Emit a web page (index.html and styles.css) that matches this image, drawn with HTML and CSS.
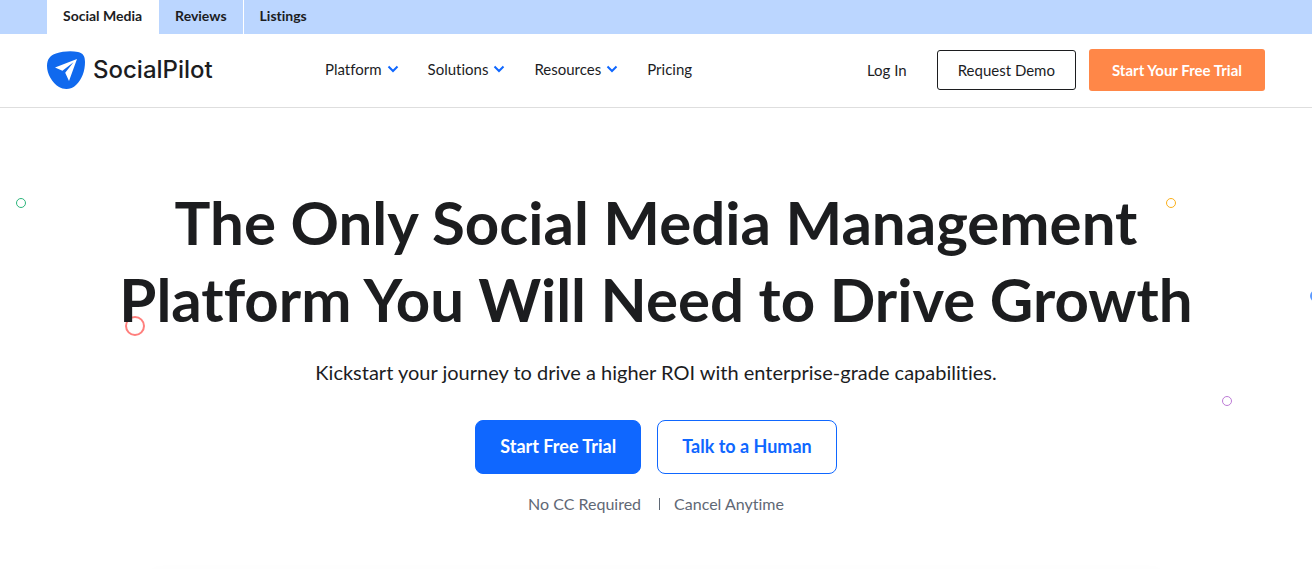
FILE: index.html
```html
<!DOCTYPE html>
<html lang="en">
<head>
<meta charset="utf-8">
<meta name="viewport" content="width=device-width, initial-scale=1">
<title>SocialPilot</title>
<link rel="stylesheet" href="styles.css">
</head>
<body>
<nav class="topbar" aria-label="Products">
  <a class="tab tab-active" href="#">Social Media</a>
  <a class="tab" href="#">Reviews</a>
  <a class="tab tab-last" href="#">Listings</a>
</nav>
<header class="header">
  <a class="logo" href="#">
    <svg class="logo-mark" viewBox="0 0 38 38" aria-hidden="true">
      <path fill="#1069ee" d="M0 15C0 8 3 4.500 9 2.500C16 0 25-.4 31 1C36 2.200 38 5 38 11C38 20 35 28 29 34C25 38.500 17 39 12 36C5 31.500 0 23 0 15Z"/>
      <path fill="#fff" d="M30 8L8 16.600L15.400 19.800L26.500 11.200L18.200 21.700L22 30Z"/>
    </svg>
    <span>SocialPilot</span>
  </a>
  <nav class="menu" aria-label="Main">
    <button class="menu-item">Platform<svg class="chevron" viewBox="0 0 12 8" aria-hidden="true"><path d="M1.500 1.500L6 6L10.500 1.500"/></svg></button>
    <button class="menu-item">Solutions<svg class="chevron" viewBox="0 0 12 8" aria-hidden="true"><path d="M1.500 1.500L6 6L10.500 1.500"/></svg></button>
    <button class="menu-item">Resources<svg class="chevron" viewBox="0 0 12 8" aria-hidden="true"><path d="M1.500 1.500L6 6L10.500 1.500"/></svg></button>
    <a class="menu-item" href="#">Pricing</a>
  </nav>
  <div class="actions">
    <a class="login" href="#">Log In</a>
    <a class="demo" href="#">Request Demo</a>
    <a class="trial" href="#">Start Your Free Trial</a>
  </div>
</header>
<main class="hero">
  <span class="ring ring-green"></span>
  <span class="ring ring-yellow"></span>
  <span class="ring ring-red"></span>
  <span class="ring ring-blue"></span>
  <span class="ring ring-purple"></span>
  <h1 class="title">The Only Social Media Management<br>Platform You Will Need to Drive Growth</h1>
  <p class="lead">Kickstart your journey to drive a higher ROI with enterprise-grade capabilities.</p>
  <div class="cta">
    <a class="btn btn-primary" href="#">Start Free Trial</a>
    <a class="btn btn-outline" href="#">Talk to a Human</a>
  </div>
  <ul class="notes">
    <li>No CC Required</li>
    <li class="note-next">Cancel Anytime</li>
  </ul>
  <div class="preview"></div>
</main>
</body>
</html>
```
FILE: styles.css
```css
* { box-sizing: border-box; }
body {
  margin: 0;
  font-family: Lato, "Liberation Sans", sans-serif;
  font-variant-ligatures: none;
  color: #1c1d1f;
  background: #fff;
}
a { color: inherit; text-decoration: none; }

.topbar {
  display: flex;
  height: 34px;
  padding-left: 47px;
  background: #bbd6ff;
}
.tab {
  padding: 0 16px;
  border-right: 1px solid #fff;
  font-size: 14px;
  line-height: 32px;
  font-weight: 700;
}
.tab-active { background: #fff; }
.tab-last { border-right: 0; }

.header {
  display: flex;
  align-items: center;
  height: 74px;
  padding: 0 47px 2px;
  border-bottom: 1px solid #dedede;
}
.logo {
  display: flex;
  align-items: center;
  gap: 8px;
  width: 278px;
  font-family: Inter, sans-serif;
  font-size: 24px;
  font-weight: 500;
}
.logo-mark { width: 38px; height: 38px; }
.menu { display: flex; gap: 29px; }
.menu-item {
  display: flex;
  align-items: center;
  gap: 5px;
  padding: 0 0 2px;
  border: 0;
  background: none;
  color: inherit;
  font: inherit;
  font-variant-ligatures: none;
  font-size: 15px;
  line-height: 20px;
}
.chevron {
  width: 12px;
  height: 8px;
  fill: none;
  stroke: #0f67ff;
  stroke-width: 2;
}
.actions {
  display: flex;
  align-items: center;
  margin-left: auto;
  font-size: 15px;
  line-height: 20px;
  text-align: center;
}
.login { margin-right: 30px; }
.demo {
  padding: 9px 20px;
  margin-right: 13px;
  border: 1px solid #1c1d1f;
  border-radius: 3px;
}
.trial {
  padding: 11px 23px;
  border-radius: 3px;
  background: #ff8748;
  color: #fff;
  font-weight: 700;
}

.hero {
  position: relative;
  display: flex;
  flex-direction: column;
  align-items: center;
  padding-top: 76px;
  overflow: hidden;
  text-align: center;
}
.title {
  position: relative;
  z-index: 1;
  margin: 0;
  font-size: 60px;
  line-height: 77px;
  font-weight: 700;
}
.lead {
  margin: 19px 0 0;
  font-size: 20px;
  line-height: 30px;
}
.cta {
  display: flex;
  gap: 16px;
  margin-top: 33px;
}
.btn {
  padding: 0 24px 2px;
  border: 1px solid #0f67ff;
  border-radius: 8px;
  font-size: 18px;
  line-height: 50px;
  font-weight: 700;
}
.btn-primary { background: #0f67ff; color: #fff; }
.btn-outline { color: #0f67ff; }
.notes {
  display: flex;
  align-items: center;
  margin: 18px 0 0;
  padding: 0;
  list-style: none;
  color: #5f6875;
  font-size: 16px;
  line-height: 24px;
}
.note-next {
  display: flex;
  align-items: center;
  gap: 14px;
  margin-left: 18px;
}
.note-next::before {
  content: "";
  width: 1px;
  height: 12px;
  background: #5f6875;
}
.preview {
  width: 77%;
  height: 1px;
  margin-top: 56px;
  box-shadow: 0 0 12px rgba(0, 0, 0, 0.1);
}

.ring {
  position: absolute;
  width: 10px;
  height: 10px;
  border: 1px solid;
  border-radius: 50%;
}
.ring-green { left: 16px; top: 90px; color: #2db67c; }
.ring-yellow { right: 136px; top: 90px; color: #fbb01b; }
.ring-red { left: 125px; top: 208px; width: 20px; height: 20px; border-width: 2px; color: #ff7f7d; }
.ring-blue { right: -10px; top: 182px; width: 12px; height: 12px; border-width: 2px; color: #5c9aff; }
.ring-purple { right: 80px; top: 288px; color: #bd7bd6; }
```
